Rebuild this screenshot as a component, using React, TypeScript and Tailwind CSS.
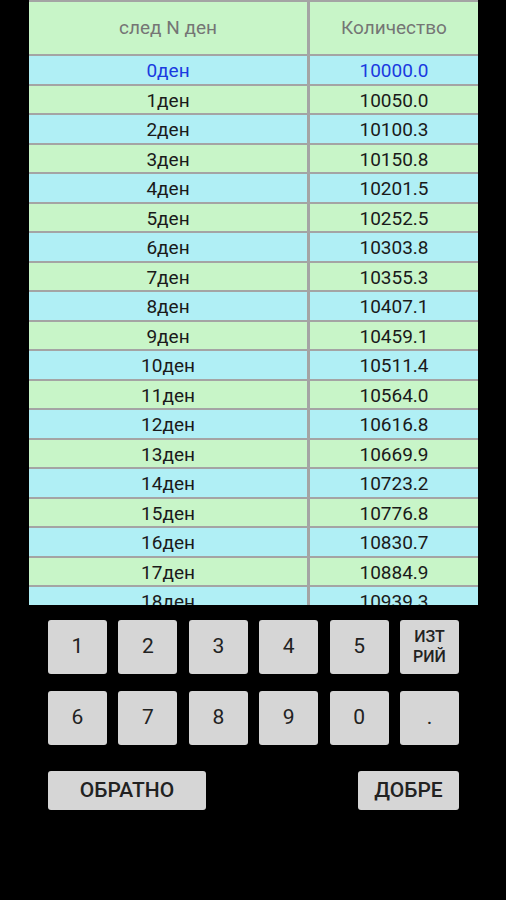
import React from 'react';

const values = [
  '10000.0', '10050.0', '10100.3', '10150.8', '10201.5', '10252.5', '10303.8',
  '10355.3', '10407.1', '10459.1', '10511.4', '10564.0', '10616.8', '10669.9',
  '10723.2', '10776.8', '10830.7', '10884.9', '10939.3',
];

const Key: React.FC<{ label: React.ReactNode; className?: string }> = ({ label, className }) => (
  <button
    className={`h-[54px] rounded-[3px] bg-[#d6d6d6] text-[#222] flex items-center justify-center ${className ?? 'w-[59px] text-[21px]'}`}
  >
    {label}
  </button>
);

const App: React.FC = () => {
  return (
    <div className="w-[506px] h-[900px] bg-black overflow-hidden" style={{ fontFamily: 'Roboto, "Noto Sans", sans-serif' }}>
      {/* table */}
      <div className="ml-[29px] w-[449px] h-[605px] overflow-hidden bg-[#a4a4a4] pt-[2px]">
        <div className="grid grid-cols-[278px_168px] gap-x-[3px] gap-y-[2px]">
          <div className="h-[52px] bg-[#c8f5c8] flex items-center justify-center text-[19px] text-[#757575]">след N ден</div>
          <div className="h-[52px] bg-[#c8f5c8] flex items-center justify-center text-[19px] text-[#757575]">Количество</div>
          {values.map((v, i) => {
            const bg = i % 2 === 0 ? 'bg-[#b0eff5]' : 'bg-[#c8f5c8]';
            const color = i === 0 ? 'text-[#1a3ae0]' : 'text-[#1a1a1a]';
            return (
              <React.Fragment key={i}>
                <div className={`h-[27.5px] ${bg} ${color} flex items-center justify-center text-[19px] leading-none pt-[2px]`}>{i}ден</div>
                <div className={`h-[27.5px] ${bg} ${color} flex items-center justify-center text-[19px] leading-none pt-[2px]`}>{v}</div>
              </React.Fragment>
            );
          })}
        </div>
      </div>

      {/* keypad */}
      <div className="ml-[48px] w-[411px] mt-[15px] flex flex-col gap-[17px]">
        <div className="flex justify-between">
          {['1', '2', '3', '4', '5'].map((k) => (
            <Key key={k} label={k} />
          ))}
          <Key
            label={<span className="leading-[20px] font-medium">ИЗТ<br />РИЙ</span>}
            className="w-[59px] text-[16px]"
          />
        </div>
        <div className="flex justify-between">
          {['6', '7', '8', '9', '0', '.'].map((k) => (
            <Key key={k} label={k} />
          ))}
        </div>
        <div className="flex justify-between mt-[9px]">
          <Key label="ОБРАТНО" className="w-[158px] !h-[39px] text-[21px] font-medium" />
          <Key label="ДОБРЕ" className="w-[101px] !h-[39px] text-[21px] font-medium" />
        </div>
      </div>
    </div>
  );
};

export default App;
